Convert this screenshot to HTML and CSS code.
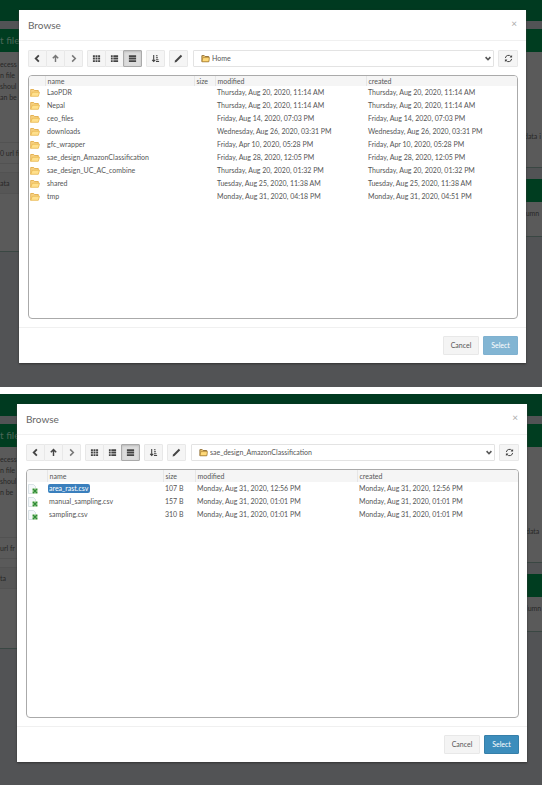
FILE: index.html
```
<!DOCTYPE html>
<html lang="en">
<head>
<meta charset="utf-8">
<title>Browse</title>
<link rel="stylesheet" href="styles.css">
</head>
<body>
<svg class="defs" aria-hidden="true">
  <symbol id="left" viewBox="0 0 10 10"><path d="M6.5 1.5 3 5l3.500 3.500" fill="none" stroke="currentColor" stroke-width="2"/></symbol>
  <symbol id="right" viewBox="0 0 10 10"><path d="M3.500 1.500 7 5 3.500 8.500" fill="none" stroke="currentColor" stroke-width="1.700"/></symbol>
  <symbol id="up" viewBox="0 0 10 10"><path d="M5 9V2M2 4.800 5 1.800l3 3" fill="none" stroke="currentColor" stroke-width="1.600"/></symbol>
  <symbol id="grid" viewBox="0 0 10 10"><path d="M1 1.500h2.200v2H1zm2.900 0h2.200v2H3.900zm2.900 0H9v2H6.800zM1 4.200h2.200v2H1zm2.900 0h2.200v2H3.900zm2.900 0H9v2H6.800zM1 6.900h2.200v2H1zm2.900 0h2.200v2H3.900zm2.900 0H9v2H6.800z" fill="currentColor"/></symbol>
  <symbol id="list" viewBox="0 0 10 10"><path d="M1 1.500h2v2H1zm2.700 0H9v2H3.700zM1 4.200h2v2H1zm2.700 0H9v2H3.700zM1 6.900h2v2H1zm2.700 0H9v2H3.700z" fill="currentColor"/></symbol>
  <symbol id="rows" viewBox="0 0 10 10"><path d="M1 1.500h8v2H1zm0 2.700h8v2H1zm0 2.700h8v2H1z" fill="currentColor"/></symbol>
  <symbol id="sort" viewBox="0 0 10 10"><path d="M3 1v7M1.300 6.500 3 8.300l1.700-1.800M5.500 2h1.800M5.500 4.200h2.200M5.500 6.300h2.800M5.500 8.400H9" fill="none" stroke="currentColor" stroke-width="1.200"/></symbol>
  <symbol id="pencil" viewBox="0 0 10 10"><path d="M.6 9.500l.6-2.200L7.600.9l1.500 1.500-6.400 6.500z" fill="currentColor"/></symbol>
  <symbol id="refresh" viewBox="0 0 10 10"><path d="M1.500 4.500a3.500 3.500 0 0 1 6.300-1.600M8.500 5.500a3.500 3.500 0 0 1-6.300 1.600" fill="none" stroke="currentColor" stroke-width="1.100"/><path d="M9 1.200v2.800H6.200zM1 8.800V6h2.800z" fill="currentColor"/></symbol>
  <symbol id="chevron" viewBox="0 0 10 10"><path d="M2 3.300 5 6.500l3-3.200" fill="none" stroke="currentColor" stroke-width="2"/></symbol>
  <symbol id="folder" viewBox="0 0 10 10"><path d="M.7 8.300V1.500h3l.8 1h3.800v2" fill="#f7d283" stroke="#dfa63c" stroke-width=".8"/><path d="M.7 8.300 2.300 4.200h7.200L8.300 8.300z" fill="#ffe08d" stroke="#e8b64f" stroke-width=".8"/></symbol>
  <symbol id="path-folder" viewBox="0 0 10 10"><path d="M1 8.500V1.800h2.600l1 1h4v5.700z" fill="#f5cc72" stroke="#8a6930"/><path d="M1.200 8.500 2 4h7.400l-.8 4.500z" fill="#ffda7a" stroke="#a67a2c" stroke-width=".7"/></symbol>
  <symbol id="sheet" viewBox="0 0 10 10"><path d="M.5.5h5l2 2v7h-7z" fill="#f5f8fa" stroke="#c3d0d6" stroke-width=".6"/><path d="M4.300 4.300H9.700V9.700H4.300z" fill="#a9d59e"/><path d="m5 5 4 4M9 5 5 9" stroke="#2e8b36" stroke-width="1.400"/></symbol>
</svg>

<section class="scene scene-home">
  <div class="page" aria-hidden="true">
    <div class="topbar"></div>
    <div class="columns">
      <div class="panel panel-input">
        <div class="panel-head">t file</div>
        <div class="panel-body">
          <p class="note">ecess<br>n file<br>shoul<br>an be</p>
          <p class="field">0 url fr</p>
          <p class="field tab">ata</p>
        </div>
      </div>
      <div class="side">
        <div class="panel panel-data"><div class="panel-head"></div><div class="panel-body">data i</div></div>
        <div class="panel panel-cols"><div class="panel-head"></div><div class="panel-body">lumn</div></div>
      </div>
    </div>
  </div>
  <div class="modal" role="dialog" aria-label="Browse">
    <header class="modal-head"><h2>Browse</h2><button class="close" aria-label="Close">×</button></header>
    <div class="modal-body">
      <div class="toolbar">
        <div class="group">
          <button class="tool" aria-label="Back"><svg><use href="#left"/></svg></button><button class="tool soft" aria-label="Up"><svg><use href="#up"/></svg></button><button class="tool soft" aria-label="Forward"><svg><use href="#right"/></svg></button>
        </div>
        <div class="group">
          <button class="tool" aria-label="Icons"><svg><use href="#grid"/></svg></button><button class="tool" aria-label="List"><svg><use href="#list"/></svg></button><button class="tool active" aria-label="Details"><svg><use href="#rows"/></svg></button>
        </div>
        <div class="group"><button class="tool" aria-label="Sort"><svg><use href="#sort"/></svg></button></div>
        <div class="group"><button class="tool" aria-label="Rename"><svg><use href="#pencil"/></svg></button></div>
        <div class="path">
          <svg class="path-icon"><use href="#path-folder"/></svg>
          <select aria-label="Folder"><option>Home</option></select>
          <svg class="path-arrow"><use href="#chevron"/></svg>
        </div>
        <button class="tool reload" aria-label="Refresh"><svg><use href="#refresh"/></svg></button>
      </div>
      <div class="files">
        <table>
          <colgroup><col class="c-icon"><col class="c-name"><col class="c-size"><col class="c-modified"><col></colgroup>
          <thead><tr><th></th><th>name</th><th>size</th><th>modified</th><th>created</th></tr></thead>
          <tbody>
            <tr><td><svg><use href="#folder"/></svg></td><td>LaoPDR</td><td></td><td>Thursday, Aug 20, 2020, 11:14 AM</td><td>Thursday, Aug 20, 2020, 11:14 AM</td></tr>
            <tr><td><svg><use href="#folder"/></svg></td><td>Nepal</td><td></td><td>Thursday, Aug 20, 2020, 11:14 AM</td><td>Thursday, Aug 20, 2020, 11:14 AM</td></tr>
            <tr><td><svg><use href="#folder"/></svg></td><td>ceo_files</td><td></td><td>Friday, Aug 14, 2020, 07:03 PM</td><td>Friday, Aug 14, 2020, 07:03 PM</td></tr>
            <tr><td><svg><use href="#folder"/></svg></td><td>downloads</td><td></td><td>Wednesday, Aug 26, 2020, 03:31 PM</td><td>Wednesday, Aug 26, 2020, 03:31 PM</td></tr>
            <tr><td><svg><use href="#folder"/></svg></td><td>gfc_wrapper</td><td></td><td>Friday, Apr 10, 2020, 05:28 PM</td><td>Friday, Apr 10, 2020, 05:28 PM</td></tr>
            <tr><td><svg><use href="#folder"/></svg></td><td>sae_design_AmazonClassification</td><td></td><td>Friday, Aug 28, 2020, 12:05 PM</td><td>Friday, Aug 28, 2020, 12:05 PM</td></tr>
            <tr><td><svg><use href="#folder"/></svg></td><td>sae_design_UC_AC_combine</td><td></td><td>Thursday, Aug 20, 2020, 01:32 PM</td><td>Thursday, Aug 20, 2020, 01:32 PM</td></tr>
            <tr><td><svg><use href="#folder"/></svg></td><td>shared</td><td></td><td>Tuesday, Aug 25, 2020, 11:38 AM</td><td>Tuesday, Aug 25, 2020, 11:38 AM</td></tr>
            <tr><td><svg><use href="#folder"/></svg></td><td>tmp</td><td></td><td>Monday, Aug 31, 2020, 04:18 PM</td><td>Monday, Aug 31, 2020, 04:51 PM</td></tr>
          </tbody>
        </table>
      </div>
    </div>
    <footer class="modal-foot"><button class="btn">Cancel</button><button class="btn primary" disabled>Select</button></footer>
  </div>
</section>

<section class="scene scene-design">
  <div class="page" aria-hidden="true">
    <div class="topbar"></div>
    <div class="columns">
      <div class="panel panel-input">
        <div class="panel-head">t file</div>
        <div class="panel-body">
          <p class="note">ecess<br>n file<br>shoul<br>n be</p>
          <p class="field">url fr</p>
          <p class="field tab">ta</p>
        </div>
      </div>
      <div class="side">
        <div class="panel panel-data"><div class="panel-head"></div><div class="panel-body">data</div></div>
        <div class="panel panel-cols"><div class="panel-head"></div><div class="panel-body">lumn</div></div>
      </div>
    </div>
  </div>
  <div class="modal" role="dialog" aria-label="Browse">
    <header class="modal-head"><h2>Browse</h2><button class="close" aria-label="Close">×</button></header>
    <div class="modal-body">
      <div class="toolbar">
        <div class="group">
          <button class="tool" aria-label="Back"><svg><use href="#left"/></svg></button><button class="tool" aria-label="Up"><svg><use href="#up"/></svg></button><button class="tool soft" aria-label="Forward"><svg><use href="#right"/></svg></button>
        </div>
        <div class="group">
          <button class="tool" aria-label="Icons"><svg><use href="#grid"/></svg></button><button class="tool" aria-label="List"><svg><use href="#list"/></svg></button><button class="tool active" aria-label="Details"><svg><use href="#rows"/></svg></button>
        </div>
        <div class="group"><button class="tool" aria-label="Sort"><svg><use href="#sort"/></svg></button></div>
        <div class="group"><button class="tool" aria-label="Rename"><svg><use href="#pencil"/></svg></button></div>
        <div class="path">
          <svg class="path-icon"><use href="#path-folder"/></svg>
          <select aria-label="Folder"><option>sae_design_AmazonClassification</option></select>
          <svg class="path-arrow"><use href="#chevron"/></svg>
        </div>
        <button class="tool reload" aria-label="Refresh"><svg><use href="#refresh"/></svg></button>
      </div>
      <div class="files">
        <table>
          <colgroup><col class="c-icon"><col class="c-name"><col class="c-size"><col class="c-modified"><col></colgroup>
          <thead><tr><th></th><th>name</th><th>size</th><th>modified</th><th>created</th></tr></thead>
          <tbody>
            <tr><td><svg><use href="#sheet"/></svg></td><td><span class="picked">area_rast.csv</span></td><td>107 B</td><td>Monday, Aug 31, 2020, 12:56 PM</td><td>Monday, Aug 31, 2020, 12:56 PM</td></tr>
            <tr><td><svg><use href="#sheet"/></svg></td><td>manual_sampling.csv</td><td>157 B</td><td>Monday, Aug 31, 2020, 01:01 PM</td><td>Monday, Aug 31, 2020, 01:01 PM</td></tr>
            <tr><td><svg><use href="#sheet"/></svg></td><td>sampling.csv</td><td>310 B</td><td>Monday, Aug 31, 2020, 01:01 PM</td><td>Monday, Aug 31, 2020, 01:01 PM</td></tr>
          </tbody>
        </table>
      </div>
    </div>
    <footer class="modal-foot"><button class="btn">Cancel</button><button class="btn primary">Select</button></footer>
  </div>
</section>
</body>
</html>
```
FILE: styles.css
```
* { box-sizing: border-box; }

body {
  margin: 0;
  min-height: 100vh;
  display: flex;
  flex-direction: column;
  gap: 7px;
  background: #fff;
  color: #555;
  font-family: Lato, "Liberation Sans", sans-serif;
  font-size: 7px;
  line-height: 11px;
}

button, select { font: inherit; color: inherit; margin: 0; }
h2, p { margin: 0; font-weight: 400; }
.defs { display: none; }

/* A scene stacks the dimmed page and the dialog in one grid cell. */
.scene {
  display: grid;
  grid-template: minmax(0, 1fr) / minmax(0, 1fr);
  overflow: hidden;
  background: #525355;
}
.scene > * { grid-area: 1 / 1; }
.scene-design { flex: 1; }

/* Dimmed page */
.page { color: #272727; white-space: nowrap; overflow: hidden; }
.topbar { height: 21px; margin-bottom: 8px; background: #003a20; }
.columns { display: flex; justify-content: space-between; }
.panel { background: #5a5a5a; border-bottom: 1px solid #3a4743; }
.panel-head { height: 23px; background: #003d20; color: #4b6657; font-size: 10px; line-height: 22px; }
.panel-input { width: 50%; height: 223px; }
.panel-input .panel-body { padding-top: 7px; }
.note { height: 83px; }
.field { height: 22px; margin-bottom: 8px; padding-top: 5px; border: solid #525252; border-width: 1px 0; }
.tab { background: #565656; }
.side { width: 20px; }
.side .panel-body { padding-left: 2px; overflow: hidden; }
.panel-data { height: 139px; margin-bottom: 11px; }
.panel-data .panel-body { padding-top: 79px; }
.panel-cols { height: 58px; }
.panel-cols .panel-body { padding-top: 6px; }
.scene-design .topbar { height: 22px; }
.scene-design .panel-input { height: 225px; }
.scene-design .side { width: 18px; }

/* Dialog */
.modal {
  display: flex;
  flex-direction: column;
  margin: 10px 16px 24px 19px;
  background: #fff;
  box-shadow: 0 1px 2px #333;
}
.modal-head {
  display: flex;
  justify-content: space-between;
  height: 31px;
  padding: 8px 9px;
  border-bottom: 1px solid #f0f0f0;
}
.modal-head h2 { font-size: 10px; line-height: 15px; color: #666; }
.close { height: 10px; padding: 0; border: 0; background: none; color: #aaa; font-size: 10px; line-height: 10px; }
.modal-body { flex: 1; display: flex; flex-direction: column; padding: 9px 8px 8px 9px; }

.toolbar { display: flex; gap: 4px; height: 17px; margin-bottom: 8px; }
.group { display: flex; }
.tool {
  width: 19px;
  display: grid;
  place-items: center;
  padding: 0;
  border: 1px solid #e8e8e8;
  border-radius: 1px;
  background: #f5f5f5;
  color: #444;
}
.tool + .tool { margin-left: -1px; }
.tool svg { width: 9px; height: 9px; }
.tool.soft { color: #777; }
.tool.active { background: #dcdcdc; border-color: #aaa; box-shadow: inset 0 1px 2px #bbb; }
.tool.reload { width: 20px; }

.path { position: relative; flex: 1; margin-left: 1px; }
.path select {
  width: 100%;
  height: 17px;
  padding: 0 16px 0 18px;
  appearance: none;
  border: 1px solid #e3e3e3;
  border-radius: 1px;
  background: #fff;
}
.path-icon, .path-arrow { position: absolute; top: 4px; width: 9px; height: 9px; pointer-events: none; }
.path-icon { left: 8px; }
.path-arrow { right: 2px; width: 8px; }

.files {
  flex: 1;
  min-height: 244px;
  border: 1px solid #aaa;
  border-radius: 4px;
  overflow: hidden;
}
table { width: 100%; table-layout: fixed; border-collapse: collapse; white-space: nowrap; }
th, td { height: 13px; padding: 0 0 0 2px; font-weight: 400; text-align: left; line-height: 11px; }
th { height: 12px; background: #f5f5f5; line-height: 10px; }
th + th { border-left: 1px solid #e6e6e6; }
.scene-home th { height: 10px; }
td:first-child { padding-left: 1px; }
td svg { display: block; width: 10px; height: 10px; }
.c-icon { width: 16px; }
.c-name { width: 149px; }
.c-size { width: 21px; }
.c-modified { width: 151px; }
.picked { display: inline-block; margin-left: -1px; padding: 0 2px 0 1px; border-radius: 2px; line-height: 9px; background: #3a7fbd; color: #fff; }

.modal-foot {
  display: flex;
  justify-content: flex-end;
  gap: 4px;
  height: 36px;
  padding: 8px;
  border-top: 1px solid #f0f0f0;
}
.btn {
  height: 19px;
  width: 36px;
  padding: 0;
  border: 1px solid #e8e8e8;
  border-radius: 1px;
  background: #f4f4f4;
  line-height: 17px;
}
.btn.primary { width: 35px; border-color: #367fa9; background: #3c8dbc; color: #fff; }
.btn.primary:disabled { border-color: #7fb1d0; background: #82b5d3; }

.scene-design .modal { margin: 10px 15px 23px 17px; }
.scene-design .c-icon { width: 20px; }
.scene-design .c-name { width: 116px; }
.scene-design .c-size { width: 32px; }
.scene-design .c-modified { width: 162px; }
```
